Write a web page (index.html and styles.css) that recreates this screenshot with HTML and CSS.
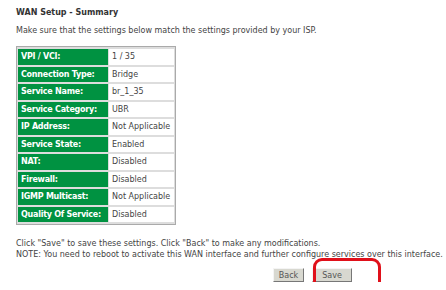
FILE: index.html
```html
<!DOCTYPE html>
<html lang="en">
<head>
    <meta charset="UTF-8">
    <title>WAN Setup - Summary</title>
    <link rel="stylesheet" href="styles.css">
</head>
<body>
    <div class="page">
        <div class="title">WAN Setup - Summary</div>
        <p class="intro">Make sure that the settings below match the settings provided by your ISP.</p>

        <table class="summary">
            <tr><td class="label">VPI / VCI:</td><td class="value">1 / 35</td></tr>
            <tr><td class="label">Connection Type:</td><td class="value">Bridge</td></tr>
            <tr><td class="label">Service Name:</td><td class="value">br_1_35</td></tr>
            <tr><td class="label">Service Category:</td><td class="value">UBR</td></tr>
            <tr><td class="label">IP Address:</td><td class="value">Not Applicable</td></tr>
            <tr><td class="label">Service State:</td><td class="value">Enabled</td></tr>
            <tr><td class="label">NAT:</td><td class="value">Disabled</td></tr>
            <tr><td class="label">Firewall:</td><td class="value">Disabled</td></tr>
            <tr><td class="label">IGMP Multicast:</td><td class="value">Not Applicable</td></tr>
            <tr><td class="label">Quality Of Service:</td><td class="value">Disabled</td></tr>
        </table>

        <p class="note">
            Click "Save" to save these settings. Click "Back" to make any modifications.<br>
            NOTE: You need to reboot to activate this WAN interface and further configure services over this interface.
        </p>

        <div class="actions">
            <button class="btn btn-back">Back</button>
            <span class="save-wrap">
                <button class="btn btn-save">Save</button>
                <span class="highlight"></span>
            </span>
        </div>
    </div>
</body>
</html>
```

FILE: styles.css
```css
body {
    margin: 0;
    padding: 0;
    background: white;
    font-family: 'DejaVu Sans', Verdana, sans-serif;
    font-size: 8px;
    color: #444;
}
.page {
    padding: 6px 0 0 16px;
}
.title {
    font-weight: bold;
    color: #333;
    height: 13px;
    line-height: 13px;
}
.intro {
    margin: 6px 0 0 0;
    line-height: 12px;
}
.summary {
    margin-top: 9px;
    border: 1px solid #aaa;
    border-spacing: 1px 2px;
    background: #ddd;
}
.summary td {
    height: 15.5px;
    padding: 0 3px;
    line-height: 15px;
    white-space: nowrap;
}
.label {
    width: 84px;
    background: #009241;
    color: white;
    font-weight: bold;
    letter-spacing: -0.25px;
}
.value {
    width: 59px;
    background: white;
    color: #444;
}
.note {
    margin: 13px 0 0 0;
    line-height: 11px;
}
.actions {
    margin: 8px 0 0 257px;
    display: flex;
    gap: 8px;
}
.btn {
    font-family: inherit;
    font-size: 8px;
    color: #555;
    background: #d8d8d0;
    border: 1px solid;
    border-color: #f4f4f4 #777 #777 #f4f4f4;
    height: 14px;
    padding: 0;
}
.btn-back {
    width: 31px;
}
.btn-save {
    width: 40px;
}
.save-wrap {
    position: relative;
    display: flex;
}
.highlight {
    position: absolute;
    left: 1px;
    top: -10px;
    width: 62px;
    height: 32px;
    border: 3px solid #e0101a;
    border-radius: 9px;
}
```
